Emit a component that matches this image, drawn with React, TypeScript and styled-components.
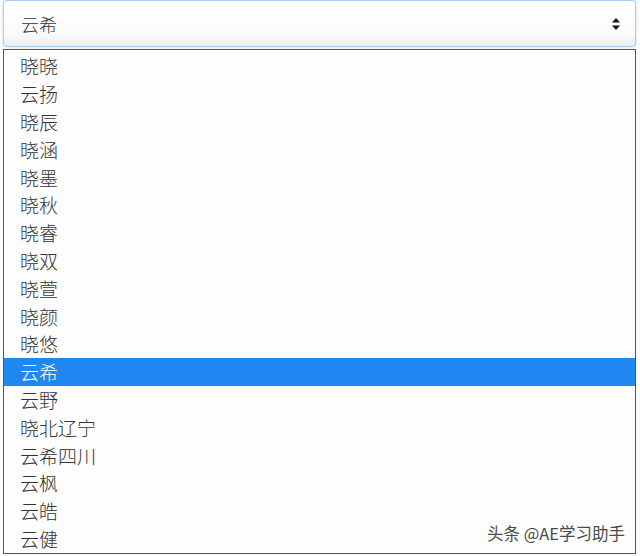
import React from 'react';
import styled, { createGlobalStyle } from 'styled-components';

const GlobalStyle = createGlobalStyle`
  html, body {
    margin: 0;
    padding: 0;
    background: #ffffff;
  }
  body {
    font-family: "Noto Sans CJK SC", "Noto Sans", sans-serif;
  }
`;

const Page = styled.div`
  position: relative;
  width: 640px;
  height: 556px;
  padding: 0 4px 0 3px;
  box-sizing: border-box;
  overflow: hidden;
  background: #fbfbfb;
`;

const SelectBox = styled.div`
  height: 47px;
  box-sizing: border-box;
  border: 1px solid #a9cdee;
  border-radius: 4px;
  background: linear-gradient(#ffffff 0%, #fafbfc 70%, #eceff2 100%);
  display: flex;
  align-items: center;
  justify-content: space-between;
  padding: 0 14px 0 17px;
  box-shadow: 0 0 2px rgba(120, 170, 220, 0.5);
`;

const SelectedText = styled.span`
  font-size: 18px;
  font-weight: 300;
  color: #333;
  line-height: 1;
`;

const List = styled.ul`
  list-style: none;
  margin: 2px 0 0 0;
  padding: 2px 0 0 0;
  border: 1px solid #555;
  height: 505px;
  box-sizing: border-box;
  background: #fdfdfe;
`;

const Option = styled.li<{ $active?: boolean }>`
  height: 27.8px;
  display: flex;
  align-items: center;
  padding-left: 16px;
  font-size: 19px;
  font-weight: 300;
  color: ${({ $active }) => ($active ? '#ffffff' : '#333333')};
  background: ${({ $active }) => ($active ? '#1e88f0' : 'transparent')};
`;

const Watermark = styled.div`
  position: absolute;
  right: 15px;
  bottom: 11px;
  font-size: 16.5px;
  color: #4a4a4a;
  text-shadow: 1px 1px 0 #fff, -1px -1px 0 #fff;
`;

const options = [
  '晓晓', '云扬', '晓辰', '晓涵', '晓墨', '晓秋', '晓睿', '晓双', '晓萱',
  '晓颜', '晓悠', '云希', '云野', '晓北辽宁', '云希四川', '云枫', '云皓', '云健',
];

const SortArrows = () => (
  <svg width="10" height="14" viewBox="0 0 10 14">
    <path d="M5 1 L9 5.5 H1 Z" fill="#111" />
    <path d="M5 13 L9 8.5 H1 Z" fill="#111" />
  </svg>
);

export default function App() {
  return (
    <>
      <GlobalStyle />
      <Page>
        <SelectBox>
          <SelectedText>云希</SelectedText>
          <SortArrows />
        </SelectBox>
        <List>
          {options.map((name, i) => (
            <Option key={name + i} $active={i === 11}>
              {name}
            </Option>
          ))}
        </List>
        <Watermark>头条 @AE学习助手</Watermark>
      </Page>
    </>
  );
}
